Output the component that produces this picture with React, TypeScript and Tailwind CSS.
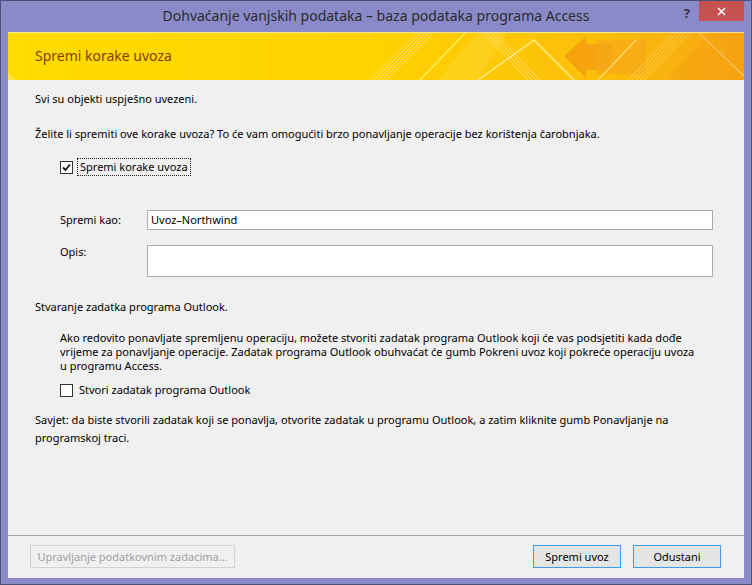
import React from "react";

const FONT = { fontFamily: '"Noto Sans", "Open Sans", "Liberation Sans", sans-serif' };

function Banner() {
  // decorative stripes in the wizard header
  return (
    <svg className="absolute inset-0" width="736" height="48" viewBox="0 0 736 48">
      <defs>
        <linearGradient id="bg" x1="0" y1="0" x2="1" y2="0">
          <stop offset="0" stopColor="#ffdc00" />
          <stop offset="0.5" stopColor="#ffd200" />
          <stop offset="0.8" stopColor="#fbbf0a" />
          <stop offset="1" stopColor="#f6a515" />
        </linearGradient>
      </defs>
      <rect width="736" height="48" fill="url(#bg)" />
      <polygon points="0,40 8,48 0,48" fill="#ffe766" opacity="0.7" />
      <g stroke="#ffe680" strokeWidth="1" opacity="0.8">
        <line x1="362" y1="48" x2="410" y2="0" />
        <line x1="366" y1="48" x2="414" y2="0" />
        <line x1="370" y1="48" x2="418" y2="0" />
        <line x1="374" y1="48" x2="422" y2="0" />
        <line x1="378" y1="48" x2="426" y2="0" />
      </g>
      <line x1="412" y1="48" x2="458" y2="0" stroke="#ffee66" strokeWidth="1.5" opacity="0.9" />
      <polygon points="430,48 470,0 500,0 470,48" fill="#ffe45a" opacity="0.25" />
      <g stroke="#ffe9a0" strokeWidth="1" opacity="0.7">
        <line x1="474" y1="0" x2="520" y2="48" />
        <line x1="478" y1="0" x2="524" y2="48" />
        <line x1="482" y1="0" x2="528" y2="48" />
        <line x1="486" y1="0" x2="532" y2="48" />
      </g>
      <polyline points="470,48 526,8 566,48" fill="none" stroke="#fff0a0" strokeWidth="1.5" opacity="0.85" />
      <polygon points="556,24 578,4 578,12 604,12 604,38 578,38 578,46" fill="#f5a010" opacity="0.9" />
      <rect x="588" y="8" width="50" height="34" fill="#f7a818" opacity="0.7" />
      <line x1="590" y1="48" x2="628" y2="8" stroke="#ffe080" strokeWidth="1.2" opacity="0.9" />
      <g stroke="#ffd860" strokeWidth="1" opacity="0.75">
        <line x1="620" y1="48" x2="666" y2="0" />
        <line x1="624" y1="48" x2="670" y2="0" />
        <line x1="628" y1="48" x2="674" y2="0" />
        <line x1="632" y1="48" x2="678" y2="0" />
        <line x1="636" y1="48" x2="682" y2="0" />
      </g>
      <polygon points="660,48 700,0 736,0 736,48" fill="#f4a012" opacity="0.45" />
      <line x1="690" y1="0" x2="736" y2="44" stroke="#ffd070" strokeWidth="1.2" opacity="0.8" />
      <rect x="0" y="0" width="736" height="1" fill="#fff2b0" opacity="0.8" />
    </svg>
  );
}

function CheckBox({ checked }: { checked: boolean }) {
  return (
    <span className="w-[13px] h-[13px] border border-[#333] bg-white flex items-center justify-center shrink-0">
      {checked && (
        <svg width="9" height="9" viewBox="0 0 9 9">
          <path d="M1 4.5 L3.5 7 L8 1.5" fill="none" stroke="#111" strokeWidth="1.8" />
        </svg>
      )}
    </span>
  );
}

export default function App() {
  return (
    <div className="w-[752px] h-[585px] bg-[#8a8ac9] border border-[#4d4d7a] flex flex-col text-[11px] leading-[14px] text-black" style={FONT}>
      <div className="h-[31px] grid grid-cols-[90px_1fr_90px] shrink-0">
        <div />
        <div className="flex items-center justify-center text-[14px] text-[#2b2b2b] pb-[1px] whitespace-nowrap">
          Dohvaćanje vanjskih podataka – baza podataka programa Access
        </div>
        <div className="flex items-start justify-end pr-[7px]">
          <span className="mt-[5px] mr-[9px] text-[13px] font-bold text-[#333]">?</span>
          <div className="w-[45px] h-[20px] bg-[#c75050] flex items-center justify-center">
            <svg width="9" height="9" viewBox="0 0 9 9">
              <path d="M1 1 L8 8 M8 1 L1 8" stroke="#fff" strokeWidth="1.6" />
            </svg>
          </div>
        </div>
      </div>

      <div className="mx-[7px] w-[736px] h-[546px] bg-[#f0f0f0] flex flex-col">
        <div className="relative h-[48px] shrink-0 overflow-hidden">
          <Banner />
          <div className="relative pl-[27px] pt-[15px] text-[14px] leading-[18px] text-[#8a3a00]">Spremi korake uvoza</div>
        </div>

        <div className="pl-[27px] pt-[12px]">
          <p>Svi su objekti uspješno uvezeni.</p>
          <p className="mt-[21px] whitespace-nowrap">Želite li spremiti ove korake uvoza? To će vam omogućiti brzo ponavljanje operacije bez korištenja čarobnjaka.</p>

          <div className="ml-[25px] mt-[17px] flex items-center gap-[4px]">
            <CheckBox checked />
            <span className="border border-dotted border-[#222] px-[2px] py-[1px]">Spremi korake uvoza</span>
          </div>

          <div className="ml-[25px] mt-[34px] flex items-center">
            <span className="w-[87px]">Spremi kao:</span>
            <div className="w-[566px] h-[20px] bg-white border border-[#abadb3] pl-[3px] flex items-center">Uvoz–Northwind</div>
          </div>

          <div className="ml-[25px] mt-[15px] flex items-start">
            <span className="w-[87px]">Opis:</span>
            <div className="w-[566px] h-[32px] bg-white border border-[#abadb3]" />
          </div>

          <p className="mt-[23px]">Stvaranje zadatka programa Outlook.</p>

          <p className="ml-[25px] mt-[17px] whitespace-nowrap">
            Ako redovito ponavljate spremljenu operaciju, možete stvoriti zadatak programa Outlook koji će vas podsjetiti kada dođe
            <br />
            vrijeme za ponavljanje operacije. Zadatak programa Outlook obuhvaćat će gumb Pokreni uvoz koji pokreće operaciju uvoza
            <br />
            u programu Access.
          </p>

          <div className="ml-[25px] mt-[10px] flex items-center gap-[6px]">
            <CheckBox checked={false} />
            <span>Stvori zadatak programa Outlook</span>
          </div>

          <p className="mt-[14px] leading-[18px] whitespace-nowrap">
            Savjet: da biste stvorili zadatak koji se ponavlja, otvorite zadatak u programu Outlook, a zatim kliknite gumb Ponavljanje na
            <br />
            programskoj traci.
          </p>
        </div>

        <div className="mt-auto border-t border-[#a0a0a0] h-[43px] flex items-center px-[22px] pb-[1px] shrink-0">
          <div className="w-[205px] h-[23px] border border-[#d2d2d2] bg-[#f0f0f0] text-[#a0a0a0] flex items-center justify-center whitespace-nowrap">
            Upravljanje podatkovnim zadacima...
          </div>
          <div className="ml-auto flex gap-[12px] mr-[1px]">
            <div className="w-[88px] h-[23px] border border-[#3c9cf0] bg-[#e5e5e5] flex items-center justify-center">Spremi uvoz</div>
            <div className="w-[88px] h-[23px] border border-[#3c9cf0] bg-[#e5e5e5] flex items-center justify-center">Odustani</div>
          </div>
        </div>
      </div>
    </div>
  );
}
